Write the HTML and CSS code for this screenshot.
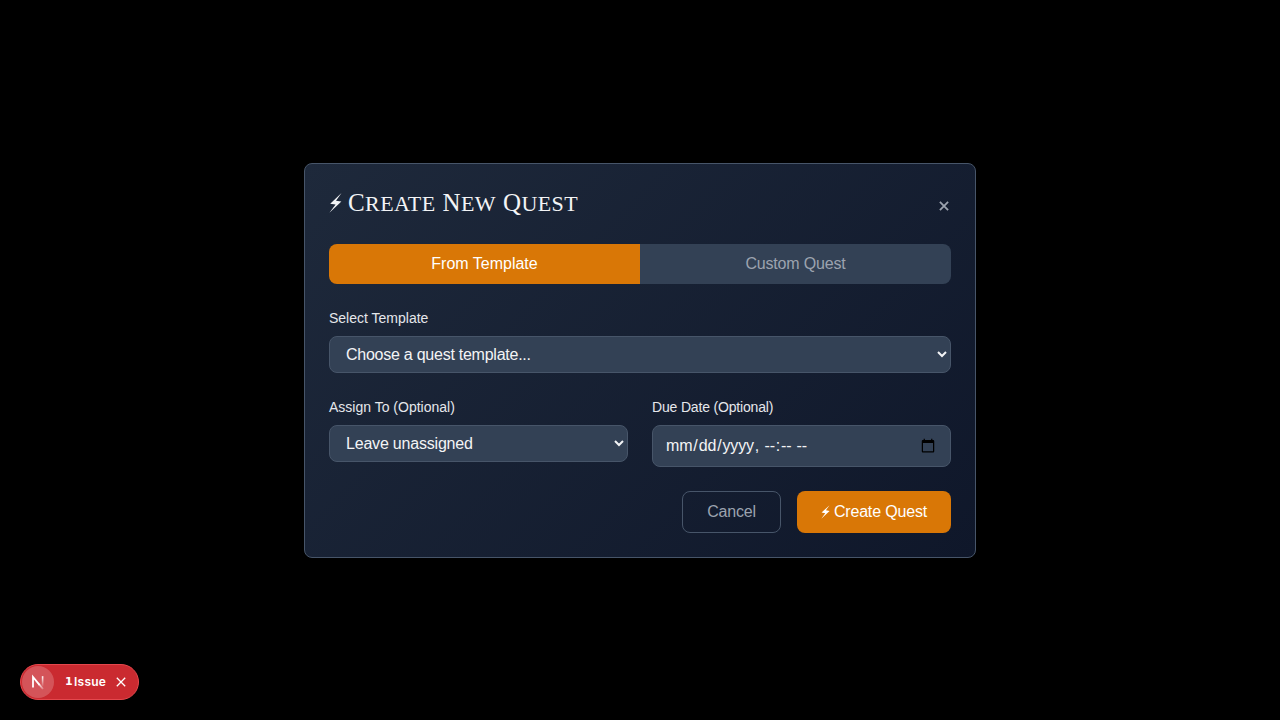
FILE: index.html
```html
<!DOCTYPE html>
<html lang="en">
<head>
<meta charset="utf-8">
<title>Create New Quest</title>
<link rel="stylesheet" href="styles.css">
</head>
<body>
<main class="overlay">
  <section class="modal" role="dialog" aria-labelledby="title">
    <header class="modal-header">
      <h2 class="title" id="title">
        <svg class="bolt" width="13" height="20" viewBox="0 0 13 20"><path d="M12.5 0L1.2 10.8L6.6 11.6L.4 19.8L12.4 8.6L7 7.8Z" fill="currentColor"/></svg>
        <span class="word">Create</span> <span class="word">New</span> <span class="word">Quest</span>
      </h2>
      <button class="close" aria-label="Close"><svg width="10" height="10" viewBox="0 0 10 10"><path d="M.9.9L9.1 9.1M9.1.9L.9 9.1" stroke="currentColor" stroke-width="1.8"/></svg></button>
    </header>
    <div class="tabs">
      <button class="tab tab-active"><span>From Template</span></button>
      <button class="tab tab-idle"><span>Custom Quest</span></button>
    </div>
    <form class="form">
      <div class="field">
        <label class="label" for="template">Select Template</label>
        <select class="control select select-wide" id="template"><option>Choose a quest template...</option></select>
      </div>
      <div class="row">
        <div class="field">
          <label class="label" for="assign">Assign To (Optional)</label>
          <select class="control select" id="assign"><option>Leave unassigned</option></select>
        </div>
        <div class="field">
          <label class="label label-due" for="due">Due Date (Optional)</label>
          <input class="control date" id="due" type="datetime-local">
        </div>
      </div>
      <div class="actions">
        <button class="btn btn-cancel" type="button">Cancel</button>
        <button class="btn btn-create" type="button"><svg class="bolt-small" width="9" height="14" viewBox="0 0 13 20"><path d="M12.5 0L.8 10.8L6.2 12L.4 19.8L12.6 8.6L7.2 7.4Z" fill="currentColor"/></svg>Create Quest</button>
      </div>
    </form>
  </section>
</main>
<aside class="issues">
  <span class="issues-logo">
    <svg width="32" height="32" viewBox="0 0 32 32" fill="none">
      <defs>
        <linearGradient id="diag" x1="17" y1="16" x2="23" y2="25" gradientUnits="userSpaceOnUse"><stop stop-color="#fff"/><stop offset="1" stop-color="#fff" stop-opacity="0"/></linearGradient>
        <linearGradient id="stem" x1="20" y1="10" x2="20" y2="21" gradientUnits="userSpaceOnUse"><stop stop-color="#fff"/><stop offset="1" stop-color="#fff" stop-opacity="0"/></linearGradient>
      </defs>
      <path d="M11 21.5V11L17.5 18.8" stroke="#fff" stroke-width="1.8"/>
      <path d="M17 18.2L21 23" stroke="url(#diag)" stroke-width="1.8"/>
      <path d="M20.6 10.2V20.5" stroke="url(#stem)" stroke-width="1.6"/>
    </svg>
  </span>
  <span class="issues-text"><span class="issues-count">1</span><span>Issue</span></span>
  <svg class="issues-close" width="10" height="10" viewBox="0 0 10 10" fill="none"><path d="M.8.8L9.2 9.2M9.2.8L.8 9.2" stroke="#fff" stroke-width="1.3"/></svg>
</aside>
</body>
</html>
```
FILE: styles.css
```css
* { box-sizing: border-box; }
body {
  margin: 0;
  background: #000;
  color: #f3f4f6;
  font: 16px/24px "Nimbus Sans", Helvetica, "Liberation Sans", sans-serif;
}
.overlay { min-height: 720px; display: flex; align-items: center; justify-content: center; }
.modal {
  width: 672px;
  height: 395px;
  padding: 24px;
  border: 1px solid #475569;
  border-radius: 8px;
  background: linear-gradient(135deg, #1e293b, #0f172a);
}
.modal-header { display: flex; justify-content: space-between; height: 32px; margin-bottom: 24px; }
.title { display: flex; gap: 7px; margin: 0; font: 400 22px/30px "Liberation Serif", serif; letter-spacing: 0.4px; white-space: nowrap; }
.bolt { margin: 5px -1px 0 0; }
.word { display: block; text-transform: uppercase; }
.word::first-letter { font-size: 25px; }
button { margin: 0; padding: 0; border: 0; background: none; font: inherit; color: inherit; }
.close { display: flex; align-items: center; width: 12px; height: 37px; color: #9ca3af; }
.tabs { display: flex; height: 40px; margin-bottom: 24px; border-radius: 8px; overflow: hidden; }
.tab { flex: 1; background: #334155; color: #9ca3af; }
.tab-idle { letter-spacing: -0.17px; }
.tab-active { background: #d97706; color: #fff; }
.form { display: flex; flex-direction: column; gap: 24px; }
.row { display: grid; grid-template-columns: 1fr 1fr; gap: 24px; align-items: start; }
.field { display: flex; flex-direction: column; gap: 8px; }
.label { font-size: 14px; line-height: 20px; color: #e5e7eb; }
.label-due { letter-spacing: -0.17px; }
.control {
  width: 100%;
  margin: 0;
  padding: 8px 12px;
  border: 1px solid #475569;
  border-radius: 8px;
  background-color: #334155;
  color: #f3f4f6;
  font: inherit;
}
.select { height: 37px; letter-spacing: -0.2px; }
.select-wide { letter-spacing: -0.25px; }
.date { height: 42px; letter-spacing: -0.15px; }
.actions { display: flex; justify-content: flex-end; gap: 16px; }
.btn { height: 42px; border-radius: 8px; }
.btn-cancel { width: 99px; border: 1px solid #475569; color: #9ca3af; letter-spacing: -0.2px; }
.btn-create { display: flex; align-items: center; width: 154px; padding: 0 24px; background: #d97706; color: #fff; white-space: nowrap; letter-spacing: -0.17px; }
.bolt-small { margin-right: 4px; }
.issues {
  position: fixed;
  left: 20px;
  bottom: 20px;
  display: flex;
  align-items: center;
  width: 119px;
  height: 36px;
  padding: 1px;
  border: 1px solid #e5484d;
  border-radius: 18px;
  background: #ca2a30;
}
.issues-logo { width: 32px; height: 32px; border-radius: 50%; background: rgba(255,255,255,.2); }
.issues-text { display: flex; gap: 2px; width: 42px; margin: 0 9px 0 11px; color: #fff; font: 600 12px/16px Inter, sans-serif; letter-spacing: 0.25px; white-space: nowrap; }
.issues-count { width: 7px; font: 700 11px/16px "DejaVu Sans", sans-serif; }
.issues-close { flex: none; }
```
